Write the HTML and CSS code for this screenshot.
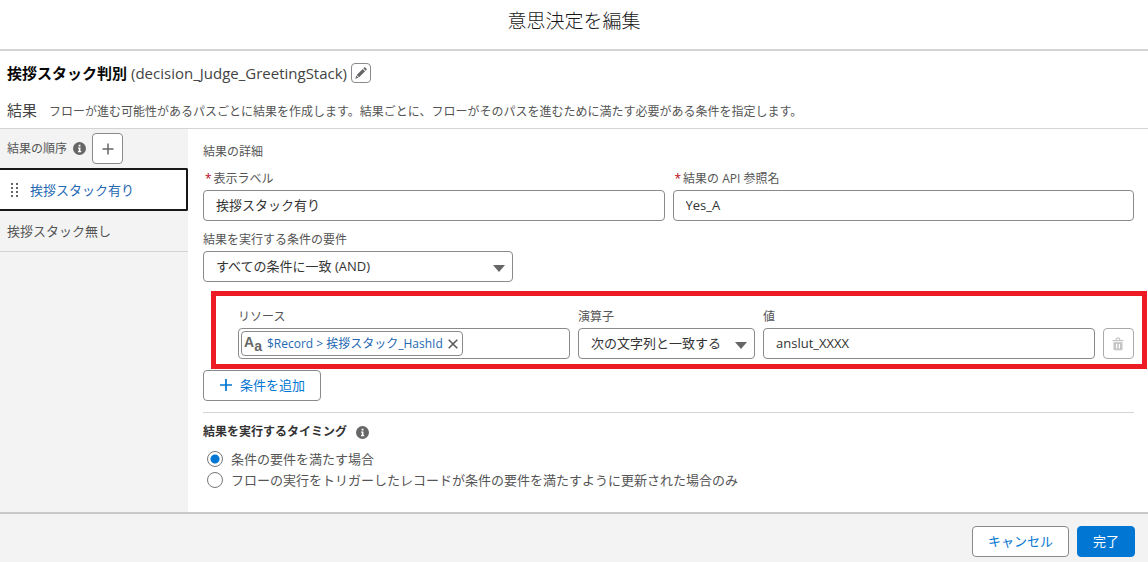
FILE: index.html
```html
<!DOCTYPE html>
<html lang="ja">
<head>
<meta charset="utf-8">
<meta name="viewport" content="width=device-width, initial-scale=1">
<title>意思決定を編集</title>
<link rel="stylesheet" href="styles.css">
</head>
<body>
<div class="modal">
  <header class="modal-header"><h1 class="modal-title">意思決定を編集</h1></header>

  <div class="intro">
    <div class="name-row">
      <h2 class="name">挨拶スタック判別</h2>
      <span class="api-name">(decision_Judge_GreetingStack)</span>
      <button class="edit-button" type="button" aria-label="編集">
        <svg width="14" height="14" viewBox="0 0 14 14"><path d="M1.300 12.700l.9-3.200 2.300 2.300zM2.700 8.900l6-6 2.400 2.400-6 6zM9.300 2.300l.8-.8q.6-.5 1.200 0l1.200 1.200q.5.600 0 1.200l-.8.8z" fill="#666"/></svg>
      </button>
    </div>
    <div class="summary-row">
      <h3 class="summary-title">結果</h3>
      <p class="summary-text">フローが進む可能性があるパスごとに結果を作成します。結果ごとに、フローがそのパスを進むために満たす必要がある条件を指定します。</p>
    </div>
  </div>

  <div class="body">
    <nav class="sidebar">
      <div class="sidebar-header">
        <span>結果の順序</span>
        <svg class="info" width="13" height="13" viewBox="0 0 12 12"><circle cx="6" cy="6" r="6" fill="#666"/><path d="M5.200 2.500h1.700v1.600h-1.700zM4.600 5h2.300v3.400h.7v1h-3v-1h.7v-2.400h-.7z" fill="#fff"/></svg>
        <button class="square-button" type="button" aria-label="結果を追加">
          <svg width="12" height="12" viewBox="0 0 12 12"><path d="M6 .5v11M.5 6h11" stroke="#666" stroke-width="1.500" fill="none"/></svg>
        </button>
      </div>
      <a class="outcome selected" href="#yes">
        <svg width="8" height="14" viewBox="0 0 8 14" fill="#666"><path d="M0 0h2v2h-2zM5 0h2v2h-2zM0 4h2v2h-2zM5 4h2v2h-2zM0 8h2v2h-2zM5 8h2v2h-2zM0 12h2v2h-2zM5 12h2v2h-2z"/></svg>
        <span>挨拶スタック有り</span>
      </a>
      <a class="outcome" href="#no">挨拶スタック無し</a>
    </nav>

    <main class="details">
      <h3 class="section-title">結果の詳細</h3>
      <div class="fields">
        <div class="field">
          <label for="label"><span class="required">*</span>表示ラベル</label>
          <input class="control" id="label" type="text" value="挨拶スタック有り">
        </div>
        <div class="field">
          <label for="api"><span class="required">*</span>結果の API 参照名</label>
          <input class="control" id="api" type="text" value="Yes_A">
        </div>
      </div>

      <div class="field logic">
        <label for="logic">結果を実行する条件の要件</label>
        <div class="select-wrap">
          <select class="control" id="logic"><option>すべての条件に一致 (AND)</option></select>
        </div>
      </div>

      <div class="condition">
        <div class="field">
          <span class="label">リソース</span>
          <div class="control resource">
            <span class="pill">
              <span class="type-icon" aria-hidden="true"><span>A</span><span class="type-icon-small">a</span></span>
              <a href="#resource">$Record &gt; 挨拶スタック_HashId</a>
              <button class="remove" type="button" aria-label="削除"><svg width="10" height="10" viewBox="0 0 10 10"><path d="M.7.7l8.600 8.600M9.300.7l-8.600 8.600" stroke="#555" stroke-width="1.500"/></svg></button>
            </span>
          </div>
        </div>
        <div class="field">
          <label for="operator">演算子</label>
          <div class="select-wrap">
            <select class="control" id="operator"><option>次の文字列と一致する</option></select>
          </div>
        </div>
        <div class="field">
          <label for="value">値</label>
          <input class="control" id="value" type="text" value="anslut_XXXX">
        </div>
        <button class="square-button" type="button" aria-label="条件を削除" disabled>
          <svg width="12" height="14" viewBox="0 0 12 14"><path d="M.5 3h3.200v-1q0-1.500 1.500-1.500h1.600q1.500 0 1.500 1.500v1h3.200v1.300h-11zM4.900 3h2.200v-1.200h-2.200zM1.500 5.300h9v6.700q0 1.300-1.300 1.300h-6.400q-1.300 0-1.300-1.300zM4 7v4.500h1.200v-4.500zM6.800 7v4.500h1.200v-4.500z" fill="#c4c4c4" fill-rule="evenodd"/></svg>
        </button>
      </div>

      <button class="button add-button" type="button">
        <svg width="12" height="12" viewBox="0 0 12 12"><path d="M6 0v12M0 6h12" stroke="#0176d3" stroke-width="1.700"/></svg>
        条件を追加
      </button>

      <fieldset class="timing">
        <legend class="timing-title">結果を実行するタイミング
          <svg class="info" width="13" height="13" viewBox="0 0 12 12"><circle cx="6" cy="6" r="6" fill="#666"/><path d="M5.200 2.500h1.700v1.600h-1.700zM4.600 5h2.300v3.400h.7v1h-3v-1h.7v-2.400h-.7z" fill="#fff"/></svg>
        </legend>
        <label class="radio"><input type="radio" name="timing" checked>条件の要件を満たす場合</label>
        <label class="radio"><input type="radio" name="timing">フローの実行をトリガーしたレコードが条件の要件を満たすように更新された場合のみ</label>
      </fieldset>
    </main>
  </div>

  <footer class="modal-footer">
    <button class="button" type="button">キャンセル</button>
    <button class="button primary" type="button">完了</button>
  </footer>
</div>
</body>
</html>
```
FILE: styles.css
```css
* { box-sizing: border-box; }

body {
  margin: 0;
  background: #fff;
  color: #555;
  font: 12px/18px "Open Sans", "Noto Sans CJK JP", sans-serif;
}

h1, h2, h3, p { margin: 0; font-weight: 400; }
svg { display: block; flex: none; }
button, input, select { font: inherit; }
a { color: #2468b2; text-decoration: none; }

.modal { display: flex; flex-direction: column; min-height: 100vh; }

.modal-header {
  padding: 7px 16px 13px;
  border-bottom: 2px solid #d4d4d4;
  text-align: center;
}
.modal-title { color: #181818; font-size: 19px; font-weight: 300; line-height: 29px; }

.intro { padding: 11px 7px 7px; border-bottom: 1px solid #d4d4d4; }
.name-row { display: flex; align-items: center; gap: 4px; height: 22px; }
.name { color: #080707; font-size: 15px; font-weight: 700; }
.api-name { color: #444; font-size: 15px; }
.edit-button {
  display: grid;
  place-items: center;
  width: 20px;
  height: 20px;
  padding: 0;
  border: 1px solid #8a8a8a;
  border-radius: 4px;
  background: #fff;
}
.summary-row { display: flex; align-items: flex-end; gap: 12px; margin-top: 15px; }
.summary-title { color: #444; font-size: 15px; line-height: 22px; white-space: nowrap; }

.body { display: flex; flex: 1; }

.sidebar { flex: none; width: 188px; background: #f3f3f3; }
.sidebar-header { display: flex; align-items: center; gap: 6px; height: 39px; padding-left: 7px; }

.square-button {
  display: grid;
  place-items: center;
  width: 31px;
  height: 31px;
  padding: 0;
  border: 1px solid #8a8a8a;
  border-radius: 4px;
  background: #fff;
}
.square-button:disabled { border-color: #aaa; }

.outcome {
  display: flex;
  align-items: center;
  height: 41px;
  padding-left: 7px;
  border-bottom: 1px solid #d4d4d4;
  color: #555;
  font-size: 13px;
}
.outcome.selected {
  gap: 11px;
  height: 43px;
  padding-left: 11px;
  border: 2px solid #181818;
  border-left: 0;
  border-radius: 0 2px 2px 0;
  background: #fff;
  color: #2468b2;
}

.details { flex: 1; min-width: 0; padding: 14px 14px 22px 15px; }
.section-title { font-size: 12px; }

.fields { display: grid; grid-template-columns: 1fr 1fr; gap: 8px; margin-top: 9px; }
.field { display: flex; flex-direction: column; gap: 2px; min-width: 0; }
.required { margin: 0 2px; color: #ba0517; }

.control {
  width: 100%;
  height: 31px;
  padding: 0 12px 2px;
  border: 1px solid #8a8a8a;
  border-radius: 4px;
  background: #fff;
  color: #333;
  font-size: 13px;
}
.select-wrap { position: relative; }
.select-wrap select { appearance: none; }
.select-wrap::after {
  content: "";
  position: absolute;
  top: 14px;
  right: 8px;
  border: 6px solid transparent;
  border-top: 7px solid #666;
  border-bottom: 0;
  pointer-events: none;
}

.logic { width: 33.3%; margin-top: 10px; }

.condition {
  display: grid;
  grid-template-columns: 15fr 8fr 15fr 31px;
  align-items: end;
  gap: 8px;
  margin: 9px -13px 1px 8px;
  padding: 12px 8px 5px 22px;
  border: 5px solid #ed1c24;
}

.resource { display: flex; align-items: center; padding: 0 2px; }
.pill {
  display: flex;
  align-items: center;
  gap: 5px;
  height: 25px;
  padding: 0 4px 0 2px;
  border: 1px solid #8a8a8a;
  border-radius: 4px;
  font-size: 12px;
  white-space: nowrap;
}
.type-icon {
  display: flex;
  color: #666;
  font: 700 14px/18px "Liberation Sans", sans-serif;
}
.type-icon-small { padding-top: 4px; }
.remove { padding: 0; border: 0; background: none; }

.button {
  height: 31px;
  padding: 0 15px 2px;
  border: 1px solid #8a8a8a;
  border-radius: 4px;
  background: #fff;
  color: #0176d3;
  font-size: 13px;
}
.button.primary { border-color: #0176d3; background: #0176d3; color: #fff; }
.add-button { display: flex; align-items: center; gap: 8px; padding-left: 16px; }

.timing {
  display: grid;
  gap: 1px;
  margin: 11px 0 0;
  padding: 9px 0 0;
  border: 0;
  border-top: 1px solid #d4d4d4;
}
.timing-title {
  display: flex;
  float: left;
  align-items: center;
  gap: 9px;
  margin-bottom: 6px;
  padding: 0;
  color: #333;
  font-weight: 700;
  line-height: 20px;
}
.radio { display: flex; align-items: center; gap: 8px; font-size: 13px; line-height: 20px; }
.radio input {
  appearance: none;
  width: 16px;
  height: 16px;
  margin: 0 0 0 4px;
  border: 1px solid #777;
  border-radius: 50%;
  background: #fff;
}
.radio input:checked { background: radial-gradient(circle, #0176d3 4px, #fff 5px); }

.modal-footer {
  display: flex;
  justify-content: flex-end;
  gap: 8px;
  padding: 12px 13px 5px;
  border-top: 2px solid #c9c9c9;
  background: #f3f3f3;
}
```
